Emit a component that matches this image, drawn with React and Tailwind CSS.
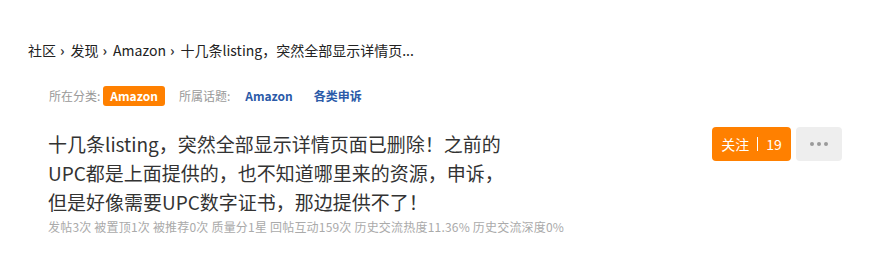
export default function App() {
  const crumbs = ["社区", "发现", "Amazon"];
  return (
    <div className="h-[253px] w-[869px] bg-white font-['Noto_Sans_CJK_SC','Microsoft_YaHei',sans-serif] text-[#333]">
      {/* breadcrumb */}
      <nav className="flex items-center pl-[28px] pt-[41px] text-[14px] leading-[18px] text-[#222]">
        {crumbs.map((c) => (
          <span key={c} className="flex items-center">
            <span>{c}</span>
            <span className="ml-[4px] mr-[6px] text-[14px] font-bold text-[#333]">›</span>
          </span>
        ))}
        <span>十几条listing，突然全部显示详情页...</span>
      </nav>

      {/* category + topics */}
      <div className="mt-[27px] flex items-center pl-[49px] text-[12px] leading-[20px]">
        <span className="text-[#999]">所在分类:</span>
        <span className="ml-[3px] rounded-[3px] bg-[#ff8000] px-[7px] text-[12px] font-bold leading-[20px] text-white">
          Amazon
        </span>
        <span className="ml-[14px] text-[#999]">所属话题:</span>
        <span className="ml-[15px] font-bold text-[#2b5aa8]">Amazon</span>
        <span className="ml-[21px] font-bold text-[#2b5aa8]">各类申诉</span>
      </div>

      {/* title row */}
      <div className="mt-[21px] flex items-start justify-between pl-[48px] pr-[27px]">
        <div>
          <h1 className="mt-[2px] w-[465px] text-[19px] font-normal leading-[29px] text-[#333]">
            十几条listing，突然全部显示详情页面已删除！之前的UPC都是上面提供的，也不知道哪里来的资源，申诉，但是好像需要UPC数字证书，那边提供不了！
          </h1>
          <p className="mt-[3px] text-[12px] leading-[16px] tracking-[0.2px] text-[#aaa]">
            发帖3次 被置顶1次 被推荐0次 质量分1星 回帖互动159次 历史交流热度11.36% 历史交流深度0%
          </p>
        </div>
        <div className="flex gap-[5px]">
          <button className="flex h-[34px] w-[79px] items-center justify-center gap-[8px] rounded-[4px] bg-[#ff8000] text-[14px] text-white">
            <span>关注</span>
            <span className="h-[14px] w-px bg-white" />
            <span>19</span>
          </button>
          <button className="flex h-[34px] w-[46px] items-center justify-center gap-[3px] rounded-[4px] bg-[#eeeeee]">
            <span className="h-[4px] w-[4px] rounded-full bg-[#9a9a9a]" />
            <span className="h-[4px] w-[4px] rounded-full bg-[#9a9a9a]" />
            <span className="h-[4px] w-[4px] rounded-full bg-[#9a9a9a]" />
          </button>
        </div>
      </div>
    </div>
  );
}
